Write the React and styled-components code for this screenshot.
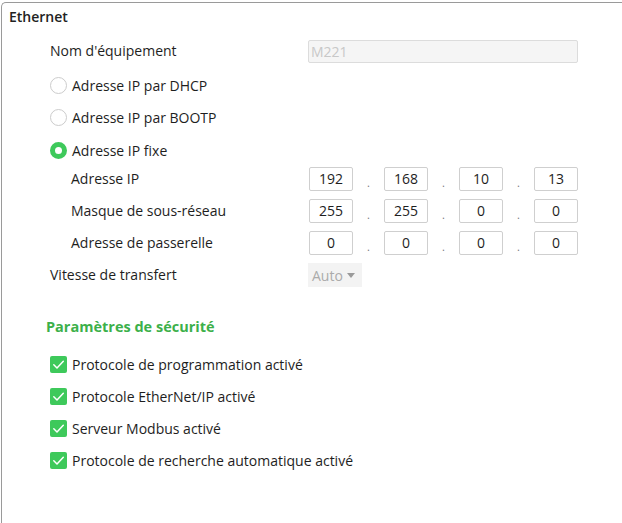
import React from "react";
import styled, { createGlobalStyle } from "styled-components";

const Global = createGlobalStyle`
  html, body { margin: 0; padding: 0; background: #fff; overflow: hidden; }
  body { font-family: "Open Sans", "Noto Sans", sans-serif; font-size: 14px; color: #1e1e1e; }
`;

const Panel = styled.div`
  margin: 2px 0 0 1px;
  height: calc(100vh - 2px);
  border: 1px solid #9a9a9a;
  border-right: none;
  border-bottom: none;
  border-top-left-radius: 5px;
  padding: 4px 0 0 7px;
  box-sizing: border-box;
`;

const Title = styled.div`
  font-size: 14px;
  font-weight: 600;
  line-height: 20px;
  color: #222;
`;

const Form = styled.div`
  display: flex;
  flex-direction: column;
  gap: 8px;
  margin-top: 12px;
  padding-left: 41px;
`;

const Row = styled.div`
  display: grid;
  grid-template-columns: ${(p) => (p.$indent ? 237 : 258)}px auto;
  padding-left: ${(p) => (p.$indent ? 21 : 0)}px;
  align-items: center;
  height: 24px;
  margin-top: ${(p) => p.$mt || 0}px;
`;

const Label = styled.span`
  line-height: 24px;
  white-space: nowrap;
`;

const TextInput = styled.div`
  width: 270px;
  height: 23px;
  box-sizing: border-box;
  border: 1px solid #dcdcdc;
  border-radius: 2px;
  background: #f5f5f5;
  color: #c8c8c8;
  padding-left: 2px;
  line-height: 21px;
`;

const Ip = styled.div`
  display: flex;
  align-items: center;
  height: 24px;
  margin-left: 1px;
`;

const Octet = styled.div`
  width: 44px;
  height: 24px;
  box-sizing: border-box;
  border: 1px solid #cfcfcf;
  border-radius: 2px;
  text-align: center;
  line-height: 22px;
  color: #1e1e1e;
`;

const Dot = styled.span`
  width: 31px;
  height: 24px;
  display: flex;
  align-items: flex-end;
  justify-content: center;
  color: #777;
  font-size: 11px;
  line-height: 14px;
  padding-bottom: 1px;
  box-sizing: border-box;
`;

const Select = styled.div`
  width: 54px;
  height: 24px;
  box-sizing: border-box;
  background: #f3f3f3;
  color: #ababab;
  display: flex;
  align-items: center;
  padding-left: 4px;
  gap: 4px;
`;

const Caret = styled.span`
  width: 0;
  height: 0;
  border-left: 4.5px solid transparent;
  border-right: 4.5px solid transparent;
  border-top: 5px solid #9a9a9a;
  margin-top: 1px;
`;

const Option = styled.label`
  display: flex;
  align-items: center;
  gap: 5px;
  height: 24px;
  margin-top: ${(p) => p.$mt || 0}px;
  white-space: nowrap;
`;

const Radio = styled.span`
  width: 17px;
  height: 17px;
  box-sizing: border-box;
  border-radius: 50%;
  border: ${(p) => (p.$on ? "5px solid #3ec95b" : "1.5px solid #cccccc")};
  background: #fff;
  flex: none;
`;

const Check = styled.span`
  width: 17px;
  height: 17px;
  border-radius: 2px;
  background: #3ec95b;
  display: flex;
  align-items: center;
  justify-content: center;
  flex: none;
`;

const Heading = styled.div`
  color: #3cb04a;
  font-weight: 700;
  font-size: 14.5px;
  line-height: 24px;
  margin: 20px 0 0 -4px;
`;

const CheckIcon = () => (
  <svg width="13" height="13" viewBox="0 0 13 13">
    <path d="M1.8 6.8 L5 10 L11.3 3.2" fill="none" stroke="#fff" strokeWidth="1.5" strokeLinecap="round" strokeLinejoin="round" />
  </svg>
);

const IpField = ({ values }) => (
  <Ip>
    {values.map((v, i) => (
      <React.Fragment key={i}>
        {i > 0 && <Dot>.</Dot>}
        <Octet>{v}</Octet>
      </React.Fragment>
    ))}
  </Ip>
);

export default function App() {
  return (
    <>
      <Global />
      <Panel>
        <Title>Ethernet</Title>
        <Form>
          <Row>
            <Label>Nom d'équipement</Label>
            <TextInput>M221</TextInput>
          </Row>
          <Option $mt={2}><Radio />Adresse IP par DHCP</Option>
          <Option><Radio />Adresse IP par BOOTP</Option>
          <Option $mt={1}><Radio $on />Adresse IP fixe</Option>
          <Row $indent $mt={-3}>
            <Label>Adresse IP</Label>
            <IpField values={["192", "168", "10", "13"]} />
          </Row>
          <Row $indent>
            <Label>Masque de sous-réseau</Label>
            <IpField values={["255", "255", "0", "0"]} />
          </Row>
          <Row $indent>
            <Label>Adresse de passerelle</Label>
            <IpField values={["0", "0", "0", "0"]} />
          </Row>
          <Row>
            <Label>Vitesse de transfert</Label>
            <Select>Auto<Caret /></Select>
          </Row>
          <Heading>Paramètres de sécurité</Heading>
          <Option $mt={5}><Check><CheckIcon /></Check>Protocole de programmation activé</Option>
          <Option><Check><CheckIcon /></Check>Protocole EtherNet/IP activé</Option>
          <Option><Check><CheckIcon /></Check>Serveur Modbus activé</Option>
          <Option><Check><CheckIcon /></Check>Protocole de recherche automatique activé</Option>
        </Form>
      </Panel>
    </>
  );
}
